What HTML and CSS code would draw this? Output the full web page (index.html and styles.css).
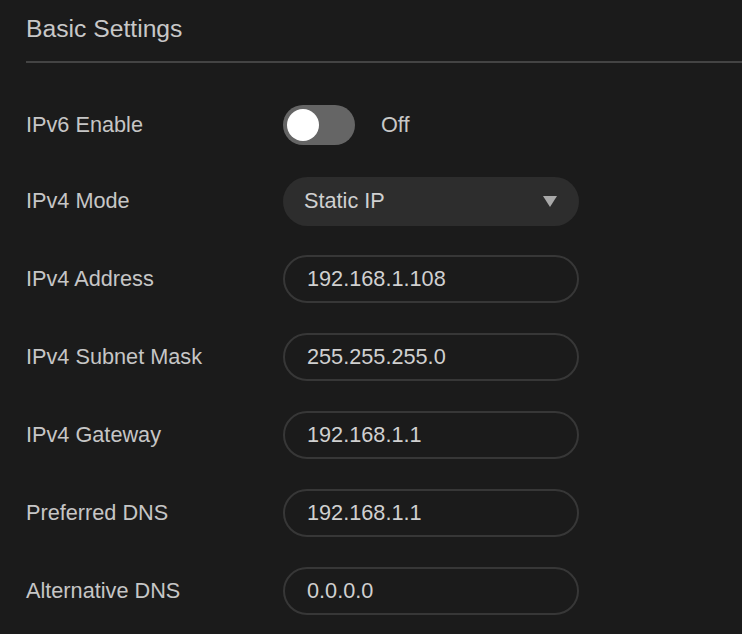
FILE: index.html
```html
<!DOCTYPE html>
<html lang="en">
<head>
<meta charset="utf-8">
<title>Basic Settings</title>
<link rel="stylesheet" href="styles.css">
</head>
<body>
<div class="page">
  <div class="header">
    <h1 class="title">Basic Settings</h1>
  </div>
  <div class="form">
    <div class="row row-toggle">
      <div class="label">IPv6 Enable</div>
      <div class="control toggle-wrap">
        <span class="toggle"><span class="knob"></span></span>
        <span class="toggle-text">Off</span>
      </div>
    </div>
    <div class="row">
      <div class="label">IPv4 Mode</div>
      <div class="control">
        <div class="select">
          <span class="select-value">Static IP</span>
          <span class="caret"></span>
        </div>
      </div>
    </div>
    <div class="row">
      <div class="label">IPv4 Address</div>
      <div class="control"><div class="field">192.168.1.108</div></div>
    </div>
    <div class="row">
      <div class="label">IPv4 Subnet Mask</div>
      <div class="control"><div class="field">255.255.255.0</div></div>
    </div>
    <div class="row">
      <div class="label">IPv4 Gateway</div>
      <div class="control"><div class="field">192.168.1.1</div></div>
    </div>
    <div class="row">
      <div class="label">Preferred DNS</div>
      <div class="control"><div class="field">192.168.1.1</div></div>
    </div>
    <div class="row">
      <div class="label">Alternative DNS</div>
      <div class="control"><div class="field">0.0.0.0</div></div>
    </div>
  </div>
</div>
</body>
</html>
```

FILE: styles.css
```css
html, body {
  margin: 0;
  padding: 0;
  background: #1b1b1b;
  height: 100%;
  overflow: hidden;
}

body {
  font-family: "Liberation Sans", Arial, sans-serif;
  color: #c8c8c8;
}

.page {
  padding-left: 26px;
}

.header {
  padding-top: 15px;
  padding-bottom: 18px;
  border-bottom: 2px solid #444444;
}

.title {
  margin: 0;
  font-size: 24.7px;
  line-height: 28px;
  font-weight: normal;
  color: #c8c8c8;
}

.form {
  display: flex;
  flex-direction: column;
  padding-top: 37px;
}

.row {
  display: flex;
  align-items: center;
  height: 48px;
  margin-bottom: 30px;
}

.row-toggle {
  height: 50px;
  margin-bottom: 27px;
}

.label {
  width: 257px;
  flex: none;
  font-size: 21.7px;
  color: #c6c6c6;
}

.control {
  display: flex;
  align-items: center;
}

.toggle {
  position: relative;
  width: 72px;
  height: 40px;
  border-radius: 20px;
  background: #656565;
  display: block;
}

.knob {
  position: absolute;
  left: 4px;
  top: 4px;
  width: 32px;
  height: 32px;
  border-radius: 50%;
  background: #ffffff;
}

.toggle-text {
  margin-left: 26px;
  font-size: 21.7px;
  color: #c8c8c8;
}

.select {
  box-sizing: border-box;
  width: 296px;
  height: 49px;
  border-radius: 25px;
  background: #2d2d2d;
  display: flex;
  align-items: center;
  justify-content: space-between;
  padding-left: 21px;
  padding-right: 22px;
}

.select-value {
  font-size: 21.7px;
  color: #d0d0d0;
}

.caret {
  width: 0;
  height: 0;
  border-left: 7px solid transparent;
  border-right: 7px solid transparent;
  border-top: 11px solid #a9a9a9;
}

.field {
  box-sizing: border-box;
  width: 296px;
  height: 48px;
  border: 2px solid #373737;
  border-radius: 24px;
  padding-left: 22px;
  display: flex;
  align-items: center;
  font-size: 21.7px;
  color: #d0d0d0;
}
```
